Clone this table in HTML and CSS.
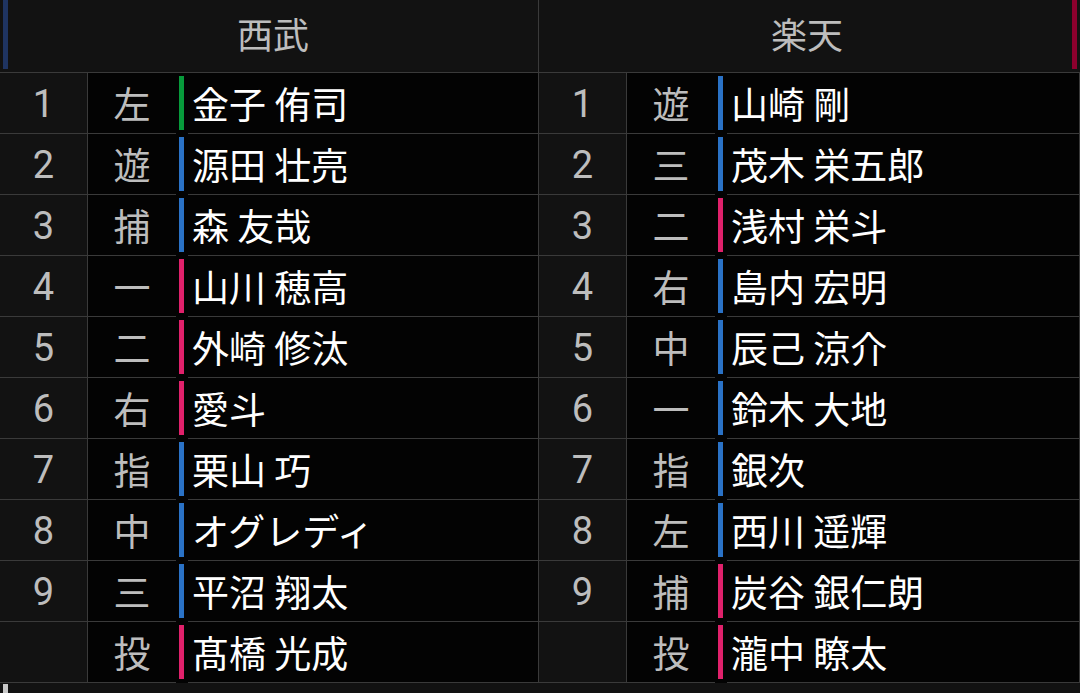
FILE: index.html
```html
<!DOCTYPE html>
<html lang="ja">
<head>
<meta charset="utf-8">
<link rel="stylesheet" href="styles.css">
</head>
<body>
<div class="board">
  <section class="team team-left">
    <header class="team-head">
      <span class="head-bar bar-lions"></span>
      <span class="head-name">西武</span>
    </header>
    <div class="row"><span class="num">1</span><span class="pos">左</span><span class="mark"><i class="m-green"></i></span><span class="name">金子 侑司</span></div>
    <div class="row"><span class="num">2</span><span class="pos">遊</span><span class="mark"><i class="m-blue"></i></span><span class="name">源田 壮亮</span></div>
    <div class="row"><span class="num">3</span><span class="pos">捕</span><span class="mark"><i class="m-blue"></i></span><span class="name">森 友哉</span></div>
    <div class="row"><span class="num">4</span><span class="pos">一</span><span class="mark"><i class="m-pink"></i></span><span class="name">山川 穂高</span></div>
    <div class="row"><span class="num">5</span><span class="pos">二</span><span class="mark"><i class="m-pink"></i></span><span class="name">外崎 修汰</span></div>
    <div class="row"><span class="num">6</span><span class="pos">右</span><span class="mark"><i class="m-pink"></i></span><span class="name">愛斗</span></div>
    <div class="row"><span class="num">7</span><span class="pos">指</span><span class="mark"><i class="m-blue"></i></span><span class="name">栗山 巧</span></div>
    <div class="row"><span class="num">8</span><span class="pos">中</span><span class="mark"><i class="m-blue"></i></span><span class="name">オグレディ</span></div>
    <div class="row"><span class="num">9</span><span class="pos">三</span><span class="mark"><i class="m-blue"></i></span><span class="name">平沼 翔太</span></div>
    <div class="row"><span class="num"></span><span class="pos">投</span><span class="mark"><i class="m-pink"></i></span><span class="name">髙橋 光成</span></div>
  </section>
  <section class="team team-right">
    <header class="team-head">
      <span class="head-name">楽天</span>
      <span class="head-bar bar-eagles"></span>
    </header>
    <div class="row"><span class="num">1</span><span class="pos">遊</span><span class="mark"><i class="m-blue"></i></span><span class="name">山崎 剛</span></div>
    <div class="row"><span class="num">2</span><span class="pos">三</span><span class="mark"><i class="m-blue"></i></span><span class="name">茂木 栄五郎</span></div>
    <div class="row"><span class="num">3</span><span class="pos">二</span><span class="mark"><i class="m-pink"></i></span><span class="name">浅村 栄斗</span></div>
    <div class="row"><span class="num">4</span><span class="pos">右</span><span class="mark"><i class="m-blue"></i></span><span class="name">島内 宏明</span></div>
    <div class="row"><span class="num">5</span><span class="pos">中</span><span class="mark"><i class="m-blue"></i></span><span class="name">辰己 涼介</span></div>
    <div class="row"><span class="num">6</span><span class="pos">一</span><span class="mark"><i class="m-blue"></i></span><span class="name">鈴木 大地</span></div>
    <div class="row"><span class="num">7</span><span class="pos">指</span><span class="mark"><i class="m-blue"></i></span><span class="name">銀次</span></div>
    <div class="row"><span class="num">8</span><span class="pos">左</span><span class="mark"><i class="m-blue"></i></span><span class="name">西川 遥輝</span></div>
    <div class="row"><span class="num">9</span><span class="pos">捕</span><span class="mark"><i class="m-pink"></i></span><span class="name">炭谷 銀仁朗</span></div>
    <div class="row"><span class="num"></span><span class="pos">投</span><span class="mark"><i class="m-pink"></i></span><span class="name">瀧中 瞭太</span></div>
  </section>
</div>
<div class="foot"><span class="scroll-thumb"></span></div>
</body>
</html>
```

FILE: styles.css
```css
html, body {
  margin: 0;
  padding: 0;
  background: #121212;
  width: 1080px;
  height: 693px;
  overflow: hidden;
}
body {
  font-family: Roboto, "Noto Sans CJK JP", sans-serif;
  color: #fff;
}
.board {
  display: flex;
}
.team {
  display: flex;
  flex-direction: column;
}
.team-left { width: 539px; }
.team-right { width: 541px; }

.team-head {
  box-sizing: border-box;
  height: 73px;
  border-bottom: 1px solid #3a3a3a;
  background: #121212;
  display: flex;
  align-items: flex-start;
  padding: 0 3px;
}
.team-left .team-head { border-right: 1px solid #3a3a3a; padding-right: 0; }
.head-bar {
  width: 5px;
  height: 69px;
  flex: none;
}
.bar-lions { background: #1f3461; }
.bar-eagles { background: #8c002d; }
.head-name {
  flex: 1;
  text-align: center;
  font-family: "Noto Sans CJK JP", sans-serif;
  font-size: 36px;
  line-height: 67px;
  color: #bdbdbd;
}

.row {
  display: grid;
  grid-template-columns: 88px 88px 12px 1fr;
  grid-template-rows: 61px;
  height: 61px;
  background: #030303;
}
.row > span {
  box-sizing: border-box;
  overflow: hidden;
}
.num, .pos, .name {
  border-bottom: 1px solid #3a3a3a;
  line-height: 60px;
}
.num {
  background: #121212;
  border-right: 1px solid #3a3a3a;
  text-align: center;
  font-size: 38px;
  line-height: 58px;
  padding-top: 2px;
  color: #bdbdbd;
}
.pos {
  text-align: center;
  font-family: "Noto Sans CJK JP", sans-serif;
  font-size: 37px;
  color: #bdbdbd;
}
.mark {
  padding: 3px 4px 0 3px;
}
.mark i {
  display: block;
  width: 5px;
  height: 54px;
}
.m-green { background: #079a3b; }
.m-blue { background: #2a72c6; }
.m-pink { background: #e0216b; }
.name {
  border-right: 1px solid #3a3a3a;
  padding-left: 4px;
  font-family: "Noto Sans CJK JP", sans-serif;
  font-size: 37px;
  color: #fff;
  white-space: nowrap;
}
.foot {
  height: 10px;
  padding-left: 3px;
  padding-top: 1px;
}
.scroll-thumb {
  display: block;
  width: 5px;
  height: 9px;
  background: #c8c8c8;
}
```
